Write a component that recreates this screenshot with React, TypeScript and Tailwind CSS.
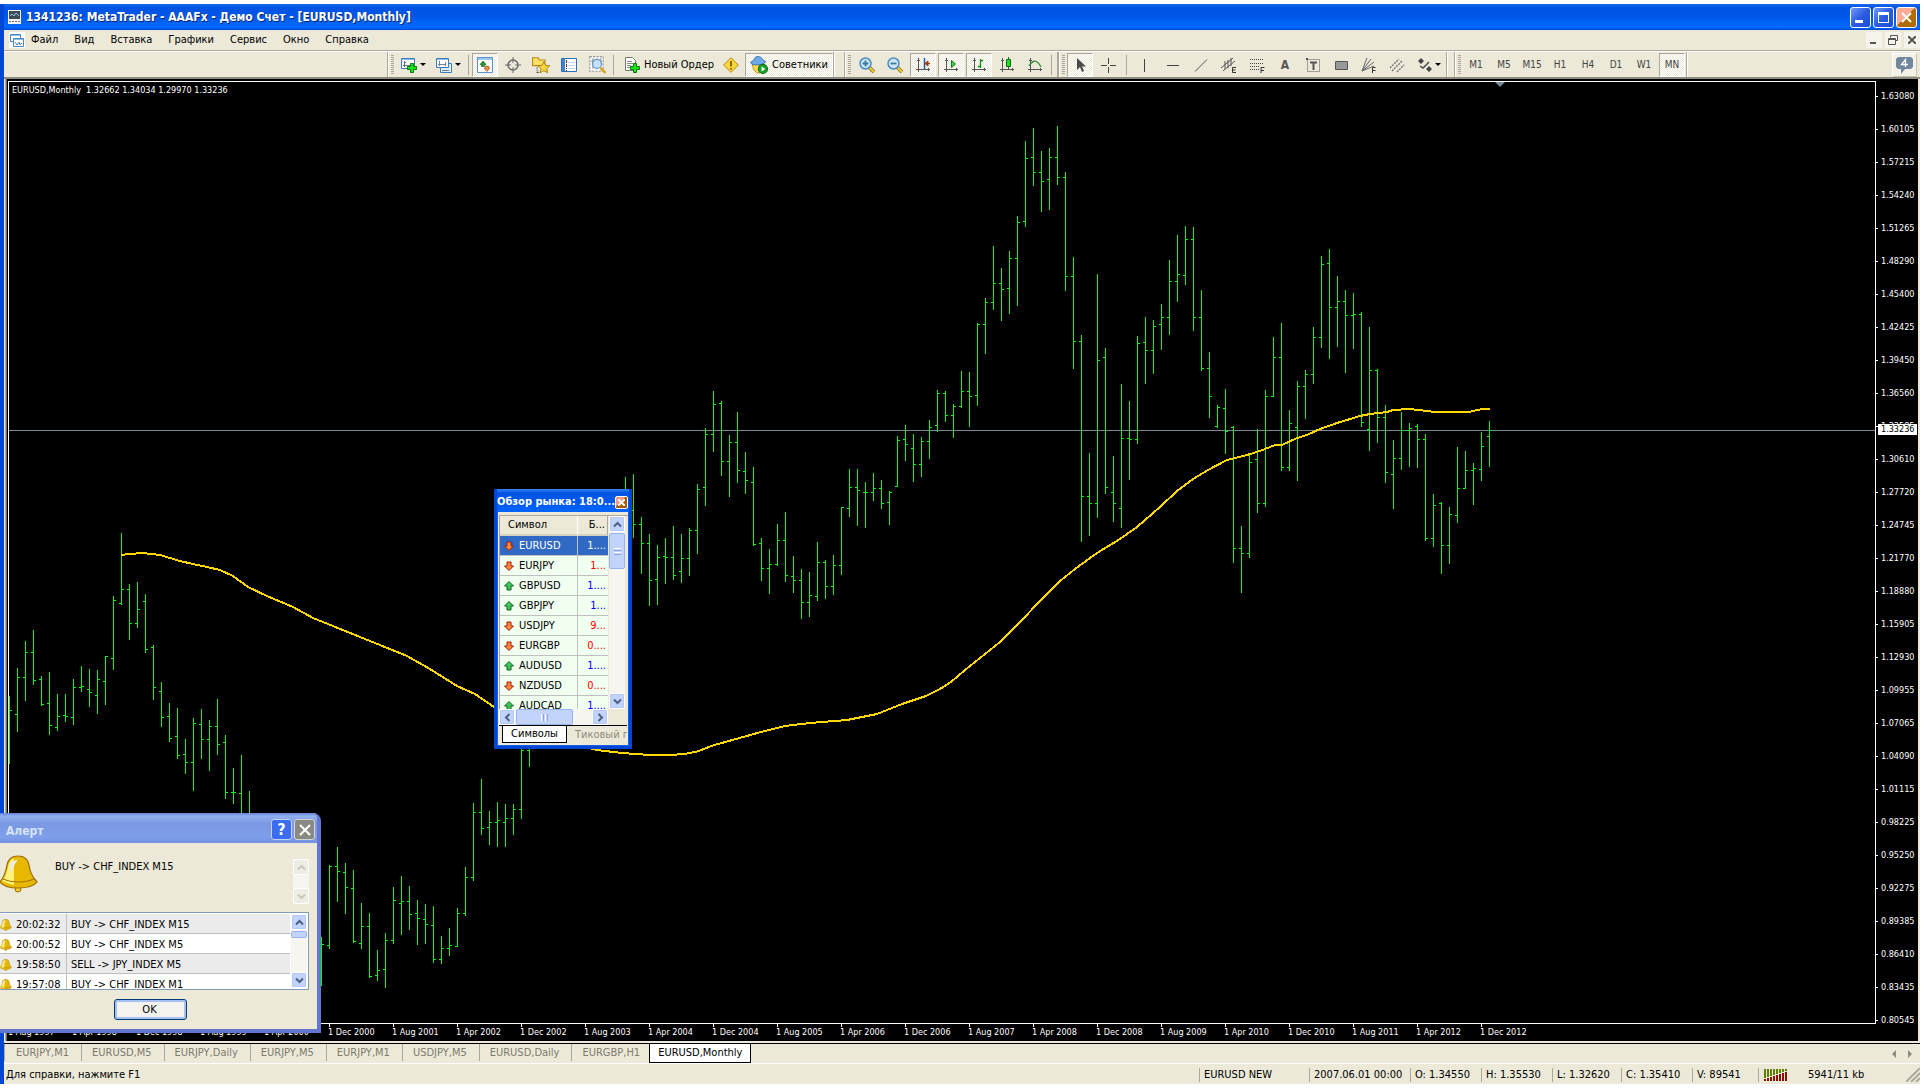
import type { ReactNode } from 'react';

// [high, low, open, close] of each monthly bar, in chart canvas rows
const BARS: number[][] = [
  [696, 764, 710, 710], [668, 732, 714, 677], [641, 701, 677, 652], [630, 685, 652, 680], [676, 706, 679, 704],
  [672, 735, 703, 725], [694, 731, 727, 716], [694, 722, 715, 716], [679, 725, 717, 687], [666, 692, 687, 686],
  [669, 707, 689, 692], [670, 714, 695, 679], [656, 705, 681, 656], [596, 670, 658, 600], [533, 605, 603, 589],
  [584, 640, 589, 623], [582, 628, 623, 609], [594, 653, 601, 649], [645, 700, 647, 687], [682, 727, 691, 717],
  [703, 742, 716, 738], [708, 759, 736, 755], [739, 774, 754, 762], [718, 791, 762, 723], [709, 759, 724, 739],
  [720, 771, 739, 726], [699, 755, 726, 744], [735, 799, 742, 792], [768, 804, 792, 792], [755, 830, 793, 825],
  [791, 850, 825, 845], [830, 880, 845, 870], [850, 900, 870, 885], [860, 910, 885, 900], [870, 920, 900, 890],
  [860, 930, 890, 915], [890, 950, 915, 930], [900, 960, 930, 940], [920, 975, 940, 944], [937, 986, 944, 944],
  [865, 949, 945, 866], [847, 902, 866, 871], [863, 914, 872, 887], [870, 943, 888, 941], [903, 949, 943, 926],
  [913, 978, 926, 976], [950, 981, 975, 970], [933, 988, 969, 940], [887, 944, 940, 900], [876, 935, 903, 901],
  [886, 930, 901, 914], [900, 945, 913, 918], [904, 944, 919, 924], [906, 963, 925, 959], [936, 964, 959, 948],
  [928, 956, 948, 945], [908, 947, 946, 913], [867, 916, 913, 877], [803, 881, 877, 812], [779, 835, 812, 828],
  [811, 845, 827, 822], [802, 847, 822, 820], [804, 847, 822, 818], [804, 835, 818, 809], [745, 819, 809, 750],
  [715, 767, 750, 735], [700, 745, 735, 710], [690, 740, 710, 715], [680, 730, 715, 690], [660, 710, 690, 670],
  [640, 700, 670, 650], [620, 680, 650, 640], [600, 660, 640, 620], [590, 640, 620, 600], [560, 620, 600, 580],
  [520, 590, 580, 540], [500, 560, 540, 510], [477, 560, 510, 510], [474, 538, 510, 524], [517, 574, 524, 543],
  [534, 606, 543, 580], [545, 605, 579, 557], [538, 584, 556, 557], [526, 580, 557, 575], [534, 583, 571, 558],
  [528, 576, 558, 530], [484, 554, 530, 489], [428, 506, 487, 434], [391, 452, 434, 404], [401, 476, 403, 461],
  [435, 497, 461, 442], [412, 483, 442, 470], [452, 494, 471, 480], [467, 546, 482, 544], [538, 581, 543, 568],
  [549, 594, 568, 564], [524, 566, 564, 540], [512, 582, 540, 575], [556, 593, 576, 580], [569, 619, 580, 602],
  [572, 617, 602, 595], [542, 601, 596, 562], [560, 599, 562, 586], [555, 595, 586, 565], [507, 575, 565, 507],
  [469, 517, 508, 487], [469, 526, 487, 490], [482, 528, 492, 492], [473, 501, 492, 488], [480, 509, 488, 503],
  [491, 525, 502, 492], [436, 487, 486, 440], [425, 461, 439, 444], [434, 482, 448, 464], [437, 477, 464, 441],
  [420, 459, 441, 427], [390, 432, 425, 393], [391, 422, 393, 415], [404, 438, 415, 406], [371, 408, 406, 391],
  [372, 427, 391, 396], [323, 406, 395, 324], [298, 354, 324, 302], [246, 310, 302, 283], [268, 321, 283, 289],
  [251, 314, 288, 258], [216, 306, 258, 222], [141, 227, 221, 158], [128, 186, 157, 172], [151, 212, 172, 181],
  [148, 210, 179, 157], [126, 185, 157, 177], [172, 291, 177, 276], [257, 369, 276, 341], [335, 542, 341, 496],
  [453, 536, 496, 503], [274, 518, 503, 360], [348, 494, 357, 487], [456, 522, 492, 503], [384, 528, 508, 438],
  [401, 480, 438, 439], [336, 444, 439, 343], [317, 384, 342, 350], [320, 374, 350, 326], [304, 350, 324, 317],
  [260, 335, 317, 281], [235, 302, 281, 274], [226, 285, 275, 239], [227, 331, 239, 317], [290, 371, 317, 368],
  [352, 418, 368, 396], [405, 428, 426, 407], [389, 454, 408, 431], [426, 563, 427, 548], [526, 593, 548, 553],
  [454, 558, 553, 462], [429, 513, 459, 503], [390, 507, 503, 396], [337, 397, 396, 357], [323, 471, 357, 467],
  [410, 471, 467, 423], [381, 481, 427, 386], [370, 419, 386, 374], [327, 384, 374, 337], [256, 348, 337, 264],
  [249, 359, 263, 307], [276, 347, 307, 301], [290, 373, 301, 315], [293, 349, 315, 314], [312, 427, 314, 422],
  [327, 451, 429, 370], [369, 443, 370, 417], [405, 483, 417, 472], [440, 509, 474, 458], [412, 470, 458, 430],
  [423, 467, 430, 428], [424, 468, 426, 439], [434, 541, 439, 538], [494, 547, 538, 505], [502, 574, 503, 545],
  [507, 564, 545, 514], [447, 523, 515, 488], [451, 489, 488, 470], [463, 505, 470, 468], [432, 481, 469, 446],
  [421, 467, 436, 430],
];

const BAR_PATH = BARS.map(([high, low, open, close], i) => {
  const x = 9 + i * 8;
  return `M${x} ${high}h1V${low}h-1zM${x - 2} ${open}h2v1h-2zM${x} ${close}h3v1h-3z`;
}).join('');

const MOVING_AVERAGE =
  '121,555 130,554 143,553 160,555 170,558 180,561 193,564 207,567 220,570 233,576 248,587 267,596 293,607 313,618 333,626 360,637 380,645 407,656 430,669 457,686 475,694 494,707 530,728 560,741 597,750 622,753 650,755 669,755 685,754 699,751 711,746 736,739 761,732 785,726 810,723 847,720 862,717 877,714 902,704 926,696 940,689 951,682 965,670 980,658 1000,642 1020,622 1041,600 1060,581 1075,569 1097,553 1120,539 1137,527 1160,507 1177,491 1193,479 1208,470 1227,460 1247,455 1260,451 1275,445 1282,445 1297,438 1307,435 1320,429 1337,423 1360,416 1370,414 1387,412 1393,410 1410,409 1427,411 1435,412 1469,412 1473,411 1482,409 1490,409';

const PRICES = [
  '1.63080', '1.60105', '1.57215', '1.54240', '1.51265', '1.48290', '1.45400', '1.42425', '1.39450', '1.36560',
  '1.33585', '1.30610', '1.27720', '1.24745', '1.21770', '1.18880', '1.15905', '1.12930', '1.09955', '1.07065',
  '1.04090', '1.01115', '0.98225', '0.95250', '0.92275', '0.89385', '0.86410', '0.83435', '0.80545',
];

const DATES = [
  '1 Aug 1997', '1 Apr 1998', '1 Dec 1998', '1 Aug 1999', '1 Apr 2000', '1 Dec 2000', '1 Aug 2001', '1 Apr 2002',
  '1 Dec 2002', '1 Aug 2003', '1 Apr 2004', '1 Dec 2004', '1 Aug 2005', '1 Apr 2006', '1 Dec 2006', '1 Aug 2007',
  '1 Apr 2008', '1 Dec 2008', '1 Aug 2009', '1 Apr 2010', '1 Dec 2010', '1 Aug 2011', '1 Apr 2012', '1 Dec 2012',
];

const MENU = ['Файл', 'Вид', 'Вставка', 'Графики', 'Сервис', 'Окно', 'Справка'];
const PERIODS = ['M1', 'M5', 'M15', 'H1', 'H4', 'D1', 'W1', 'MN'];
const CHART_TABS = ['EURJPY,M1', 'EURUSD,M5', 'EURJPY,Daily', 'EURJPY,M5', 'EURJPY,M1', 'USDJPY,M5', 'EURUSD,Daily', 'EURGBP,H1'];

const SYMBOLS = [
  { name: 'EURUSD', bid: '1....', up: false },
  { name: 'EURJPY', bid: '1...', up: false },
  { name: 'GBPUSD', bid: '1....', up: true },
  { name: 'GBPJPY', bid: '1...', up: true },
  { name: 'USDJPY', bid: '9...', up: false },
  { name: 'EURGBP', bid: '0....', up: false },
  { name: 'AUDUSD', bid: '1....', up: true },
  { name: 'NZDUSD', bid: '0....', up: false },
  { name: 'AUDCAD', bid: '1....', up: true },
];

const ALERTS = [
  { time: '20:02:32', text: 'BUY -> CHF_INDEX M15' },
  { time: '20:00:52', text: 'BUY -> CHF_INDEX M5' },
  { time: '19:58:50', text: 'SELL -> JPY_INDEX M5' },
  { time: '19:57:08', text: 'BUY -> CHF_INDEX M1' },
];

/* ---------- icons ---------- */

function Icon({ children, size = 16 }: { children: ReactNode; size?: number }) {
  return (
    <svg width={size} height={size} viewBox="0 0 16 16" fill="none" className="shrink-0" aria-hidden="true">
      {children}
    </svg>
  );
}

function PlusBadge() {
  return <path d="M9.5 6.5h3v3h3v3h-3v3h-3v-3h-3v-3h3z" fill="#1be31b" stroke="#0a7d0a" />;
}

function NewChartIcon() {
  return (
    <Icon>
      <path d="M.5 1.5h13v10H.5z" fill="#fff" stroke="#3f7cba" />
      <path d="M1 2h12v1H1z" fill="#8fbdea" />
      <path d="M3.5 4v6M2 8.500h8M3 5.500h2" stroke="#5f6f80" />
      <PlusBadge />
    </Icon>
  );
}

function ProfilesIcon() {
  return (
    <Icon>
      <path d="M4.500 6.500h11v9h-11z" fill="#dcebfa" stroke="#3f7cba" />
      <path d="M.5 1.500h12v9H.5z" fill="#fff" stroke="#3f7cba" />
      <path d="M1 2h11v1H1z" fill="#8fbdea" />
      <path d="M3.500 4v5M2 7.500h8M9.500 5v4M6 13.500h7" stroke="#6f8296" />
    </Icon>
  );
}

function MarketWatchIcon() {
  return (
    <Icon>
      <path d="M.5.500h15v15H.500z" fill="#fff" stroke="#5a93cf" />
      <path d="M1 1h14v2H1z" fill="#9cc6f0" />
      <path d="M6 4l3 3.500H7.500v2h-3v-2H3z" fill="#1f9a2c" stroke="#0b5d14" strokeWidth=".6" />
      <path d="M10 14.500L7 11h1.500V9h3v2H13z" fill="#f28a3c" stroke="#9c4a10" strokeWidth=".6" />
    </Icon>
  );
}

function TargetIcon() {
  return (
    <Icon>
      <circle cx="8" cy="8" r="5" stroke="#6b6b6b" strokeWidth="1.500" />
      <path d="M8 0v6M8 10v6M0 8h6M10 8h6" stroke="#6b6b6b" />
    </Icon>
  );
}

function NavigatorIcon() {
  return (
    <Icon size={18}>
      <path d="M.5 1.500h5l1 2h5v5H.500z" fill="#ffe169" stroke="#b98b12" />
      <path d="M4.500 10v6M5 14.500h3" stroke="#555" strokeDasharray="1 1" />
      <path d="M10.500 5l1.600 3.300 3.700.4-2.700 2.500.8 3.700-3.400-1.900-3.300 1.900.8-3.700L5.300 8.700l3.600-.4z" fill="#ffd640" stroke="#a67a0a" strokeWidth=".8" />
    </Icon>
  );
}

function TerminalIcon() {
  return (
    <Icon>
      <path d="M.5 1.500h15v13H.500z" fill="#fff" stroke="#2f6fb5" />
      <path d="M1 2h3v12H1z" fill="#3f83cc" />
      <path d="M5.500 3v11" stroke="#333" strokeDasharray="1 1" />
      <path d="M7 5.500h7M7 8.500h7M7 11.500h7" stroke="#c3d6ea" />
      <path d="M5 4h1v1H5zM5 8h1v1H5z" fill="#e01818" />
    </Icon>
  );
}

function TesterIcon() {
  return (
    <Icon size={18}>
      <path d="M1.500.500h12v13h-12z" fill="#f6f6f6" stroke="#9a9a9a" strokeDasharray="2 1" />
      <path d="M4.500 2v9M11.500 2v5M3 4.500h3" stroke="#8b8b8b" />
      <circle cx="8" cy="7" r="4" fill="#bcdcf8" fillOpacity=".85" stroke="#5e93c7" />
      <path d="M11 10.500l4.500 4.500" stroke="#d9a21b" strokeWidth="2.200" />
    </Icon>
  );
}

function NewOrderIcon() {
  return (
    <Icon>
      <path d="M1.500.500h7l3 3v10h-10z" fill="#fff" stroke="#777" />
      <path d="M3 4.500h5M3 6.500h6M3 8.500h4M3 10.500h3" stroke="#8a8a8a" />
      <PlusBadge />
    </Icon>
  );
}

function WarningIcon() {
  return (
    <Icon>
      <path d="M8 .700L15.300 8 8 15.300.700 8z" fill="#ffd83a" stroke="#b98508" />
      <path d="M8 4v5.500M8 11v1.500" stroke="#6b4a00" strokeWidth="1.600" />
    </Icon>
  );
}

function ExpertIcon() {
  return (
    <Icon size={18}>
      <path d="M2 7h11l-1 5-3.500 3H6L3 12z" fill="#ffd84d" stroke="#bb8a12" strokeWidth=".8" />
      <path d="M.5 6c.5-2 3-1 3.500-3.500S8 0 10 1.500s1 2.500 4 3.500c-2 3.500-12 4-13.500 1z" fill="#6fa8e6" stroke="#2f6bb0" strokeWidth=".8" />
      <circle cx="11.500" cy="11.500" r="4" fill="#17a32a" stroke="#0b6a18" />
      <path d="M10.300 9.300v4.400l3.300-2.200z" fill="#fff" />
    </Icon>
  );
}

function ZoomIcon({ plus = false }: { plus?: boolean }) {
  return (
    <Icon>
      <path d="M10 10l5 5" stroke="#8a6a08" strokeWidth="3.600" />
      <path d="M10 10l5 5" stroke="#f2d23a" strokeWidth="2" />
      <circle cx="6.500" cy="6.500" r="5.500" fill="#cfe6fb" stroke="#4a8bc9" strokeWidth="1.500" />
      <path d={plus ? 'M3.500 6.500h6M6.500 3.500v6' : 'M3.500 6.500h6'} stroke="#35799c" strokeWidth="1.800" />
    </Icon>
  );
}

function AxesIcon({ children }: { children?: ReactNode }) {
  return (
    <Icon>
      <path d="M3.500 1v14M1 12.500h14M2 3.500h3M13.500 11v3" stroke="#555" />
      {children}
    </Icon>
  );
}

function BellIcon({ size }: { size: number }) {
  return (
    <svg width={size} height={size} viewBox="0 0 38 38" className="shrink-0" aria-hidden="true">
      <circle cx="18" cy="34" r="3" fill="#f7cf2a" stroke="#9c6c00" />
      <path d="M18 1c6 0 10 3 11 9s2 10 8 17c-3 4-11 6-19 6S3 31 0 27c5-6 6-11 7-17s5-9 11-9z" fill="#e6b800" stroke="#9c6c00" strokeWidth="1.200" />
      <path d="M14 3c-4 1-5 5-6 9s-2 9-6 14c4 2 8 3 12 4z" fill="#fff27a" />
      <path d="M10 8l8-4-8 14z" fill="#ecece0" />
      <path d="M3 24c9 4 22 4 31 0" stroke="#a87400" strokeWidth="1.200" fill="none" />
    </svg>
  );
}

function QuoteArrow({ up }: { up: boolean }) {
  return (
    <svg width="10" height="10" viewBox="0 0 10 10" className="block" aria-hidden="true">
      {up ? (
        <path d="M5 .500L9.500 5H7v4H3V5H.500z" fill="#3fc45c" stroke="#14601f" />
      ) : (
        <path d="M5 9.500L.500 5H3V1h4v4h2.500z" fill="#ff8a3a" stroke="#a5190c" />
      )}
    </svg>
  );
}

function Chevron({ d }: { d: string }) {
  return (
    <svg width="9" height="9" viewBox="0 0 9 9" fill="none" stroke="currentColor" strokeWidth="2" aria-hidden="true">
      <path d={d} />
    </svg>
  );
}

const UP = 'M1 6.500L4.500 3 8 6.500';
const DOWN = 'M1 2.500L4.500 6 8 2.500';
const LEFT = 'M6.500 1L3 4.500 6.500 8';
const RIGHT = 'M2.500 1L6 4.500 2.500 8';

/* ---------- toolbar parts ---------- */

function ToolButton({ label, pressed = false, children }: { label: string; pressed?: boolean; children: ReactNode }) {
  return (
    <button type="button" aria-label={label} className="flex h-6 w-7 items-center justify-center px-px">
      <span
        className={
          pressed
            ? 'flex h-6 w-full items-center justify-center border border-t-[#aca899] border-r-white border-b-white border-l-[#aca899] bg-[repeating-conic-gradient(#ffffff_0_25%,#ece9d8_0_50%)] bg-[length:2px_2px]'
            : 'flex h-6 w-full items-center justify-center'
        }
      >
        {children}
      </span>
    </button>
  );
}

function DropButton({ label, children }: { label: string; children: ReactNode }) {
  return (
    <button type="button" aria-label={label} className="flex h-6 w-[35px] items-center gap-[3px] pl-[5px]">
      {children}
      <span className="border-x-[3px] border-t-[3px] border-x-transparent border-t-black" />
    </button>
  );
}

function Divider() {
  return <span className="mx-[2px] h-5 w-px bg-[#aca899]" />;
}

function ToolGroup({ children }: { children: ReactNode }) {
  return (
    <div className="flex h-full items-center border-r border-l border-r-[#aca899] border-l-[#aca899] shadow-[inset_1px_0_0_#fff,1px_0_0_#fff]">
      <span className="mr-px ml-[3px] h-5 w-[3px] bg-[repeating-linear-gradient(#aca899_0_1px,transparent_1px_2px)]" />
      {children}
    </div>
  );
}

function Toolbar() {
  return (
    <div className="flex h-[25px] items-center bg-[#ece9d8] pl-[383px]">
      <ToolGroup>
        <span className="w-px" />
        <DropButton label="Новый график"><NewChartIcon /></DropButton>
        <DropButton label="Профили"><ProfilesIcon /></DropButton>
        <Divider />
        <ToolButton label="Обзор рынка" pressed><MarketWatchIcon /></ToolButton>
        <ToolButton label="Окно данных"><TargetIcon /></ToolButton>
        <ToolButton label="Навигатор"><NavigatorIcon /></ToolButton>
        <ToolButton label="Терминал"><TerminalIcon /></ToolButton>
        <ToolButton label="Тестер"><TesterIcon /></ToolButton>
        <Divider />
        <button type="button" className="flex h-6 w-[101px] items-center gap-1 pl-2">
          <NewOrderIcon />
          <span className="whitespace-nowrap">Новый Ордер</span>
        </button>
        <ToolButton label="Редактор"><WarningIcon /></ToolButton>
        <button
          type="button"
          className="flex h-6 w-[88px] items-center gap-1 border border-t-[#aca899] border-r-white border-b-white border-l-[#aca899] bg-[repeating-conic-gradient(#ffffff_0_25%,#ece9d8_0_50%)] bg-[length:2px_2px] pl-1"
        >
          <ExpertIcon />
          <span className="whitespace-nowrap">Советники</span>
        </button>
      </ToolGroup>
      <span className="w-[10px]" />
      <ToolGroup>
        <span className="w-px" />
        <ToolButton label="Увеличить"><ZoomIcon plus /></ToolButton>
        <ToolButton label="Уменьшить"><ZoomIcon /></ToolButton>
        <ToolButton label="Сдвиг графика" pressed>
          <AxesIcon><path d="M9.500 1v11" stroke="#1a5fa8" strokeWidth="1.500" /><path d="M15 6.500h-4M13 4l-3 2.500L13 9z" stroke="#a33c00" fill="#a33c00" /></AxesIcon>
        </ToolButton>
        <ToolButton label="Автопрокрутка" pressed>
          <AxesIcon><path d="M8.500 3.500v7l4-3.500z" fill="#3fd44a" stroke="#0d7a18" /></AxesIcon>
        </ToolButton>
        <ToolButton label="Бары" pressed>
          <AxesIcon><path d="M9.500 2v9M9.500 3.500H12M7 9.500h2" stroke="#0d8a18" strokeWidth="1.300" /></AxesIcon>
        </ToolButton>
        <ToolButton label="Свечи">
          <AxesIcon><path d="M9.500 0v12" stroke="#0d6a18" /><path d="M7.500 2.500h4v7h-4z" fill="#1be31b" stroke="#0d6a18" /></AxesIcon>
        </ToolButton>
        <ToolButton label="Линия">
          <AxesIcon><path d="M2 9c3-5 7-8 12 1" stroke="#2f8a38" strokeWidth="1.300" /></AxesIcon>
        </ToolButton>
        <span className="mr-[5px] ml-[2px] h-5 w-px bg-[#aca899]" />
      </ToolGroup>
      <ToolGroup>
        <ToolButton label="Курсор" pressed>
          <Icon><path d="M5 1v12l3-3 2 5 2-1-2-4.500h4z" fill="#4a4a4a" /></Icon>
        </ToolButton>
        <ToolButton label="Перекрестие">
          <Icon><path d="M8.500 1v6M8.500 10v6M1 8.500h6M10 8.500h6" stroke="#444" /></Icon>
        </ToolButton>
        <span className="mx-1 h-5 w-px bg-[#aca899]" />
        <ToolButton label="Вертикальная линия"><Icon><path d="M7.500 2v13" stroke="#444" /></Icon></ToolButton>
        <ToolButton label="Горизонтальная линия"><Icon><path d="M2 8.500h12" stroke="#444" /></Icon></ToolButton>
        <ToolButton label="Трендовая линия"><Icon><path d="M2 14.500L14 2.500" stroke="#555" /></Icon></ToolButton>
        <ToolButton label="Канал">
          <Icon>
            <path d="M0 11L12 1M2 14L14 4M4 4v8M7 3v8M10 1v8" stroke="#555" />
            <path d="M15 10.500h-3.500v5H15M11.500 13h3" stroke="#333" />
          </Icon>
        </ToolButton>
        <ToolButton label="Фибоначчи">
          <Icon>
            <path d="M1 2.500h14M1 6.500h14M1 9.500h9M1 12.500h9" stroke="#444" strokeDasharray="1 1" />
            <path d="M15.500 10.500h-3.500v6M12 13.500h3" stroke="#333" />
          </Icon>
        </ToolButton>
        <ToolButton label="Текст"><span className="text-[12px] font-bold text-[#555]">A</span></ToolButton>
        <ToolButton label="Метка">
          <Icon>
            <path d="M2.500 2.500h12v12h-12z" stroke="#555" strokeDasharray="1 1" />
            <path d="M5 5.500h7M8.500 5v8" stroke="#555" strokeWidth="2" />
            <path d="M1 1h2v2H1z" fill="#555" />
          </Icon>
        </ToolButton>
        <ToolButton label="Прямоугольник">
          <Icon><path d="M2.500 4.500h12v8h-12z" fill="#999" stroke="#555" /></Icon>
        </ToolButton>
        <ToolButton label="Веер">
          <Icon>
            <path d="M1 14L6 1M1 14L10 2M1 14L13 5M1 14L13 9" stroke="#666" />
            <path d="M14.500 10.500H11.500v6M11.500 13.500h3" stroke="#333" />
          </Icon>
        </ToolButton>
        <ToolButton label="Каналы">
          <Icon><path d="M1 11L10 2M3 14L13 4M8 15L15 8" stroke="#777" strokeDasharray="2 1" strokeWidth="1.400" /></Icon>
        </ToolButton>
        <DropButton label="Стрелки">
          <Icon>
            <path d="M5 1l3 3-3 3-3-3zM13 9l3 3-3 3-3-3z" fill="#444" />
            <path d="M4 9l3 2 6-6" stroke="#444" strokeWidth="1.400" />
          </Icon>
        </DropButton>
      </ToolGroup>
      <span className="w-[7px]" />
      <ToolGroup>
        {PERIODS.map((p) => (
          <ToolButton key={p} label={p} pressed={p === 'MN'}>
            <span className="text-[10px] text-[#444]">{p}</span>
          </ToolButton>
        ))}
      </ToolGroup>
      <button type="button" aria-label="Сообщения" className="mr-[3px] ml-auto flex h-6 w-[25px] items-center justify-center border border-[#c9c5b2] border-t-white border-l-white bg-[#f4f2e8]">
        <svg width="17" height="18" viewBox="0 0 17 18" aria-hidden="true">
          <path d="M2 1h13l2 2v8l-2 2H9l-4 5v-5H2l-2-2V3z" fill="#71879c" />
          <path d="M9.500 11V3.500L5.500 8.500h6.500" stroke="#fff" strokeWidth="1.300" fill="none" />
        </svg>
      </button>
    </div>
  );
}

/* ---------- window chrome ---------- */

function TitleBar() {
  return (
    <header className="flex h-[26px] shrink-0 items-center bg-[linear-gradient(#1b68f0_0,#0054e3_4px,#0056e8_12px,#0068ff_21px,#0066ff_24px,#0044cc_26px)] pr-[3px] pl-1">
      <svg width="13" height="14" viewBox="0 0 13 14" className="shrink-0" aria-hidden="true">
        <path d="M0 0h13v14H0z" fill="#f2f2f2" />
        <path d="M1 1h11v8H1z" fill="#3c4b55" />
        <path d="M2 6l2-2 2 2 2-3 3 3" stroke="#9fc6e6" fill="none" />
        <path d="M1 11.500h11" stroke="#777" strokeDasharray="2 1" />
      </svg>
      <h1 className="ml-[5px] text-[12px] font-bold whitespace-nowrap text-white [text-shadow:1px_1px_0_#0a246a]">
        1341236: MetaTrader - AAAFx - Демо Счет - [EURUSD,Monthly]
      </h1>
      <div className="ml-auto flex gap-[2px]">
        <button type="button" aria-label="Свернуть" className="flex size-[21px] items-end rounded-[3px] border border-white bg-[linear-gradient(135deg,#6f9bff,#2a5be0_50%,#1c4fd8)] p-1">
          <span className="h-[3px] w-2 bg-white" />
        </button>
        <button type="button" aria-label="Развернуть" className="flex size-[21px] items-center justify-center rounded-[3px] border border-white bg-[linear-gradient(135deg,#6f9bff,#2a5be0_50%,#1c4fd8)]">
          <span className="size-[11px] border border-t-[3px] border-white" />
        </button>
        <button type="button" aria-label="Закрыть" className="flex size-[21px] items-center justify-center rounded-[3px] border border-white bg-[linear-gradient(135deg,#ffab93_0_45%,#b06c00_45%)]">
          <svg width="13" height="13" viewBox="0 0 13 13" stroke="#fff" strokeWidth="2" aria-hidden="true"><path d="M2 2l9 9M11 2l-9 9" /></svg>
        </button>
      </div>
    </header>
  );
}

function MenuBar() {
  return (
    <nav className="flex h-5 shrink-0 items-center pl-[5px]">
      <Icon>
        <path d="M0 0h16v16H0z" fill="#fff" />
        <path d="M1.500 2.500h10v7h-10z" stroke="#4a86c8" />
        <path d="M4.500 6.500h10v8h-10z" fill="#fff" stroke="#4a86c8" />
        <path d="M2 3h9v1H2zM5 7h9v1H5z" fill="#8fbdea" />
        <path d="M6 10l2 3 2-3 1 3 2-2" stroke="#4a86c8" />
      </Icon>
      {MENU.map((m) => (
        <button key={m} type="button" className="px-2 first-of-type:pl-[6px]">{m}</button>
      ))}
      <div className="ml-auto flex gap-[3px]">
        <button type="button" aria-label="Свернуть окно" className="flex size-4 items-end bg-[#f5f3ea] p-1"><span className="h-[2px] w-[6px] bg-[#555]" /></button>
        <button type="button" aria-label="Восстановить окно" className="flex size-4 items-center justify-center bg-[#f5f3ea]">
          <svg width="10" height="10" viewBox="0 0 10 10" fill="none" stroke="#555" aria-hidden="true"><path d="M2.500 2.500v-2h7v5h-2M.500 3.500h7v6h-7zM.500 4.500h7" /></svg>
        </button>
        <button type="button" aria-label="Закрыть окно" className="flex size-4 items-center justify-center bg-[#f5f3ea]">
          <svg width="8" height="8" viewBox="0 0 8 8" stroke="#555" strokeWidth="2" aria-hidden="true"><path d="M0 0l8 8M8 0L0 8" /></svg>
        </button>
      </div>
    </nav>
  );
}

function Chart() {
  return (
    <main className="relative flex min-h-0 flex-1 overflow-hidden border-l border-[#716f64] bg-black text-[9px] leading-[11px] text-white">
      <div className="flex min-w-0 flex-1 flex-col pt-[2px] pl-px">
        <div className="relative min-h-0 flex-1 border border-white">
          <svg className="absolute inset-0 size-full" aria-label="EURUSD,Monthly">
            <g transform="translate(-9 -82)">
              <path d="M9 430h1900v1H9z" fill="#778899" />
              <path d={BAR_PATH} fill="#00ff00" shapeRendering="crispEdges" />
              <polyline points={MOVING_AVERAGE} fill="none" stroke="#ffd700" strokeWidth="2" shapeRendering="crispEdges" />
              <path d="M1495 82h10l-5 5z" fill="#778899" />
            </g>
          </svg>
          <p className="relative mt-[3px] ml-[3px] whitespace-pre">EURUSD,Monthly  1.32662 1.34034 1.29970 1.33236</p>
        </div>
        <div className="flex h-[17px] shrink-0 overflow-hidden">
          {DATES.map((d) => (
            <div key={d} className="w-16 shrink-0 whitespace-nowrap">
              <span className="ml-px block h-[3px] w-px bg-white" />
              <span className="block">{d}</span>
            </div>
          ))}
        </div>
      </div>
      <div className="relative w-[42px] shrink-0 pt-px">
        {PRICES.map((p) => (
          <div key={p} className="flex h-[33px] items-center gap-[3px]">
            <span className="h-px w-[2px] bg-white" />
            {p}
          </div>
        ))}
        <span className="absolute top-[345px] left-[2px] w-[39px] bg-white pl-[3px] text-black">1.33236</span>
      </div>
    </main>
  );
}

function ChartTabs() {
  return (
    <div className="mt-[2px] flex h-5 shrink-0 border-t border-black">
      <div className="flex pb-[2px] text-[#7c7a6c]">
        {CHART_TABS.map((t, i) => (
          <button key={`${t}-${i}`} type="button" className="flex items-center pr-3 pl-[11px] leading-[14px] shadow-[inset_1px_0_0_#aca899] first:pl-3 last:pr-[9px]">
            {t}
          </button>
        ))}
      </div>
      <button type="button" className="border border-t-0 border-black bg-white px-2 pb-px leading-[14px]">EURUSD,Monthly</button>
      <div className="mr-2 ml-auto flex items-center gap-3">
        <span className="border-y-4 border-r-4 border-y-transparent border-r-[#8d8b7d]" />
        <span className="border-y-4 border-l-4 border-y-transparent border-l-[#8d8b7d]" />
      </div>
    </div>
  );
}

function StatusBar() {
  return (
    <footer className="flex h-[21px] shrink-0 items-center border-t border-white pt-[2px] whitespace-nowrap">
      <span className="flex-1 pl-[2px]">Для справки, нажмите F1</span>
      <span className="w-[110px] border-l border-[#aca899] pl-1">EURUSD NEW</span>
      <span className="w-[101px] border-l border-[#aca899] pl-1">2007.06.01 00:00</span>
      <span className="w-[71px] border-l border-[#aca899] pl-1">O: 1.34550</span>
      <span className="w-[71px] border-l border-[#aca899] pl-1">H: 1.35530</span>
      <span className="w-[69px] border-l border-[#aca899] pl-1">L: 1.32620</span>
      <span className="w-[71px] border-l border-[#aca899] pl-1">C: 1.35410</span>
      <span className="w-[66px] border-l border-[#aca899] pl-1">V: 89541</span>
      <div className="flex w-[162px] items-center border-l border-[#aca899] pl-[5px]">
        <svg width="24" height="12" viewBox="0 0 24 12" shapeRendering="crispEdges" aria-hidden="true">
          {[0, 1, 2, 3, 4, 5, 6, 7].map((i) => (
            <g key={i}>
              <path d={`M${i * 3} 0h2v${9 - i}h-2z`} fill="#5f8000" />
              <path d={`M${i * 3} ${10 - i}h2V12h-2z`} fill="#8f1000" />
            </g>
          ))}
        </svg>
        <span className="ml-5">5941/11 kb</span>
        <svg width="14" height="14" viewBox="0 0 14 14" stroke="#aca899" strokeWidth="2" className="ml-auto" aria-hidden="true">
          <path d="M0 14L14 0M5 14l9-9M10 14l4-4" />
        </svg>
      </div>
    </footer>
  );
}

/* ---------- floating windows ---------- */

function ScrollButton({ label, d, disabled = false }: { label: string; d: string; disabled?: boolean }) {
  return (
    <button
      type="button"
      aria-label={label}
      disabled={disabled}
      className={
        disabled
          ? 'flex size-4 shrink-0 items-center justify-center rounded-[2px] border border-white bg-[#eeede5] text-[#c9c7ba]'
          : 'flex size-4 shrink-0 items-center justify-center rounded-[2px] border border-white bg-[#c2d3fc] text-[#4d6185] shadow-[inset_0_0_0_1px_#b4c8f6]'
      }
    >
      <Chevron d={d} />
    </button>
  );
}

function MarketWatch() {
  return (
    <section className="absolute top-[489px] left-[494px] flex h-[260px] w-[138px] flex-col border-[3px] border-t-0 border-[#0046d5] bg-[#0046d5] shadow-[inset_0_0_0_1px_#1660e8]">
      <div className="flex h-[23px] shrink-0 items-center justify-between bg-[linear-gradient(#3a80f0_0,#0054e3_4px,#0058ee_14px,#0066ff_23px)] pt-[3px] pr-px">
        <h2 className="font-bold whitespace-nowrap text-white">Обзор рынка: 18:0...</h2>
        <button type="button" aria-label="Закрыть" className="flex size-[13px] shrink-0 items-center justify-center rounded-[2px] border border-white bg-[linear-gradient(135deg,#f59a80_0_45%,#a85c00_45%)]">
          <svg width="7" height="7" viewBox="0 0 7 7" stroke="#fff" strokeWidth="2" aria-hidden="true"><path d="M0 0l7 7M7 0L0 7" /></svg>
        </button>
      </div>
      <div className="mx-px mb-px flex min-h-0 flex-1 flex-col bg-[#ece9d8] pt-[3px] pl-px">
        <div className="flex h-[194px] shrink-0 border-t border-l border-[#aca899]">
          <div className="w-[108px] overflow-hidden">
            <table className="w-full table-fixed border-separate border-spacing-0 leading-[14px]">
              <thead>
                <tr>
                  <th className="h-5 w-[78px] border-r border-b-2 border-r-white border-b-[#d6d2c2] pl-2 text-left font-normal">Символ</th>
                  <th className="h-5 border-r border-b-2 border-r-[#aca899] border-b-[#d6d2c2] pr-[2px] text-right font-normal">Б...</th>
                </tr>
              </thead>
              <tbody>
                {SYMBOLS.map((s, i) => (
                  <tr key={s.name} className={i === 0 ? 'bg-[#316ac5] text-white' : 'bg-[#f0fff0]'}>
                    <td className="h-5 border-r border-b border-[#c0c0c0] pl-1">
                      <span className="flex items-center gap-[5px]">
                        <QuoteArrow up={s.up} />
                        {s.name}
                      </span>
                    </td>
                    <td className="h-5 border-b border-[#c0c0c0] pr-[2px] text-right">
                      <span className={i === 0 ? 'text-white' : s.up ? 'text-[#0000ff]' : 'text-[#ff0000]'}>{s.bid}</span>
                    </td>
                  </tr>
                ))}
              </tbody>
            </table>
          </div>
          <div className="ml-px flex w-4 flex-col bg-[#f6f5f0]">
            <ScrollButton label="Вверх" d={UP} />
            <div className="mt-px flex h-9 flex-col items-center justify-center gap-px rounded-[2px] border border-[#98b4ee] bg-[#c2d3fc]">
              <span className="h-px w-[7px] bg-white" />
              <span className="h-px w-[7px] bg-[#8ca8e6]" />
              <span className="h-px w-[7px] bg-white" />
              <span className="h-px w-[7px] bg-[#8ca8e6]" />
            </div>
            <span className="flex-1" />
            <ScrollButton label="Вниз" d={DOWN} />
          </div>
        </div>
        <div className="flex w-[109px] shrink-0 bg-[#f6f5f0]">
          <ScrollButton label="Влево" d={LEFT} />
          <div className="ml-px flex h-4 w-[57px] items-center justify-center gap-px rounded-[2px] border border-[#98b4ee] bg-[#c2d3fc]">
            <span className="h-[7px] w-px bg-white" />
            <span className="h-[7px] w-px bg-[#8ca8e6]" />
            <span className="h-[7px] w-px bg-white" />
            <span className="h-[7px] w-px bg-[#8ca8e6]" />
          </div>
          <span className="flex-1" />
          <ScrollButton label="Вправо" d={RIGHT} />
        </div>
        <div className="mr-px flex h-[18px] shrink-0 overflow-hidden border-t border-black pl-[3px] leading-[14px] whitespace-nowrap">
          <button type="button" className="-mt-px w-[65px] shrink-0 border border-t-0 border-black bg-white">Символы</button>
          <button type="button" className="pl-2 text-[#8d8b7d]">Тиковый г</button>
        </div>
      </div>
    </section>
  );
}

function AlertDialog() {
  return (
    <section role="dialog" aria-labelledby="alert-title" className="absolute bottom-[55px] left-0 h-[220px] w-[321px] overflow-hidden rounded-tr-lg border-r-4 border-b-4 border-[#6376d0] bg-[#ece9d8]">
      <div className="-mr-1 flex h-[30px] items-center bg-[linear-gradient(#5f80d8_0,#93b0f0_3px,#7b98e2_10px,#7f9fea_24px,#7590e0_30px)] pr-[6px] pl-[6px]">
        <h2 id="alert-title" className="pt-[6px] text-[12px] font-bold text-[#d8e4f8]">Алерт</h2>
        <div className="ml-auto flex gap-[2px] pt-[3px]">
          <button type="button" aria-label="Справка" className="flex size-[21px] items-center justify-center rounded-[3px] border border-[#c5d3f5] bg-[#3c6cf0] text-[16px] leading-[18px] font-bold text-white">?</button>
          <button type="button" aria-label="Закрыть" className="flex size-[21px] items-center justify-center rounded-[3px] border border-[#d4d4d4] bg-[#8a8a84]">
            <svg width="12" height="12" viewBox="0 0 12 12" stroke="#fff" strokeWidth="2" aria-hidden="true"><path d="M1 1l10 10M11 1L1 11" /></svg>
          </button>
        </div>
      </div>
      <div className="flex h-[69px] items-start pr-2">
        <div className="mt-3"><BellIcon size={38} /></div>
        <p className="mt-[17px] ml-[17px] leading-[14px]">BUY -&gt; CHF_INDEX M15</p>
        <div className="mt-4 ml-auto flex h-[45px] flex-col justify-between bg-[#f6f5f0]">
          <ScrollButton label="Прокрутить вверх" d={UP} disabled />
          <ScrollButton label="Прокрутить вниз" d={DOWN} disabled />
        </div>
      </div>
      <div className="mr-2 flex h-[78px] overflow-hidden border border-l-0 border-[#7f9db9] bg-white">
        <table className="mt-px w-[290px] table-fixed border-separate border-spacing-0 self-start leading-[14px]">
          <tbody>
            {ALERTS.map((a, i) => (
              <tr key={a.time} className={i % 2 === 0 ? 'bg-[#ebebeb]' : 'bg-white'}>
                <td className="h-5 w-[67px] border-r border-b border-[#c0c0c0] pt-[2px]">
                  <span className="flex items-center gap-1">
                    <BellIcon size={12} />
                    {a.time}
                  </span>
                </td>
                <td className="h-5 border-b border-[#c0c0c0] pt-[2px] pl-1">{a.text}</td>
              </tr>
            ))}
          </tbody>
        </table>
        <div className="my-px ml-px flex w-4 flex-col bg-[#f6f5f0]">
          <ScrollButton label="Список вверх" d={UP} />
          <span className="mt-px h-[7px] rounded-[2px] border border-[#98b4ee] bg-[#c2d3fc]" />
          <span className="flex-1" />
          <ScrollButton label="Список вниз" d={DOWN} />
        </div>
      </div>
      <button type="button" className="mt-[9px] ml-[114px] h-[21px] w-[73px] rounded-[3px] border border-[#003c74] bg-[#f4f3ee] pt-px pr-[2px] shadow-[inset_0_0_0_2px_#a6c1f2]">OK</button>
    </section>
  );
}

export default function App() {
  return (
    <div className="relative h-screen overflow-hidden bg-white pt-1 pr-1 pb-1 font-['DejaVu_Sans_Condensed','Noto_Sans',sans-serif] text-[11px] leading-[14px] text-black">
      <div className="flex h-full flex-col border-l-4 border-[#0046d5] bg-[#ece9d8]">
        <TitleBar />
        <MenuBar />
        <div className="shrink-0 border-t border-b-2 border-t-[#aca899] border-b-[#8d8b7d]">
          <div className="border-t border-white">
            <Toolbar />
          </div>
        </div>
        <div className="mr-[2px] ml-px flex min-h-0 flex-1 flex-col border-l border-[#aca899]">
          <Chart />
        </div>
        <ChartTabs />
        <StatusBar />
      </div>
      <MarketWatch />
      <AlertDialog />
    </div>
  );
}
